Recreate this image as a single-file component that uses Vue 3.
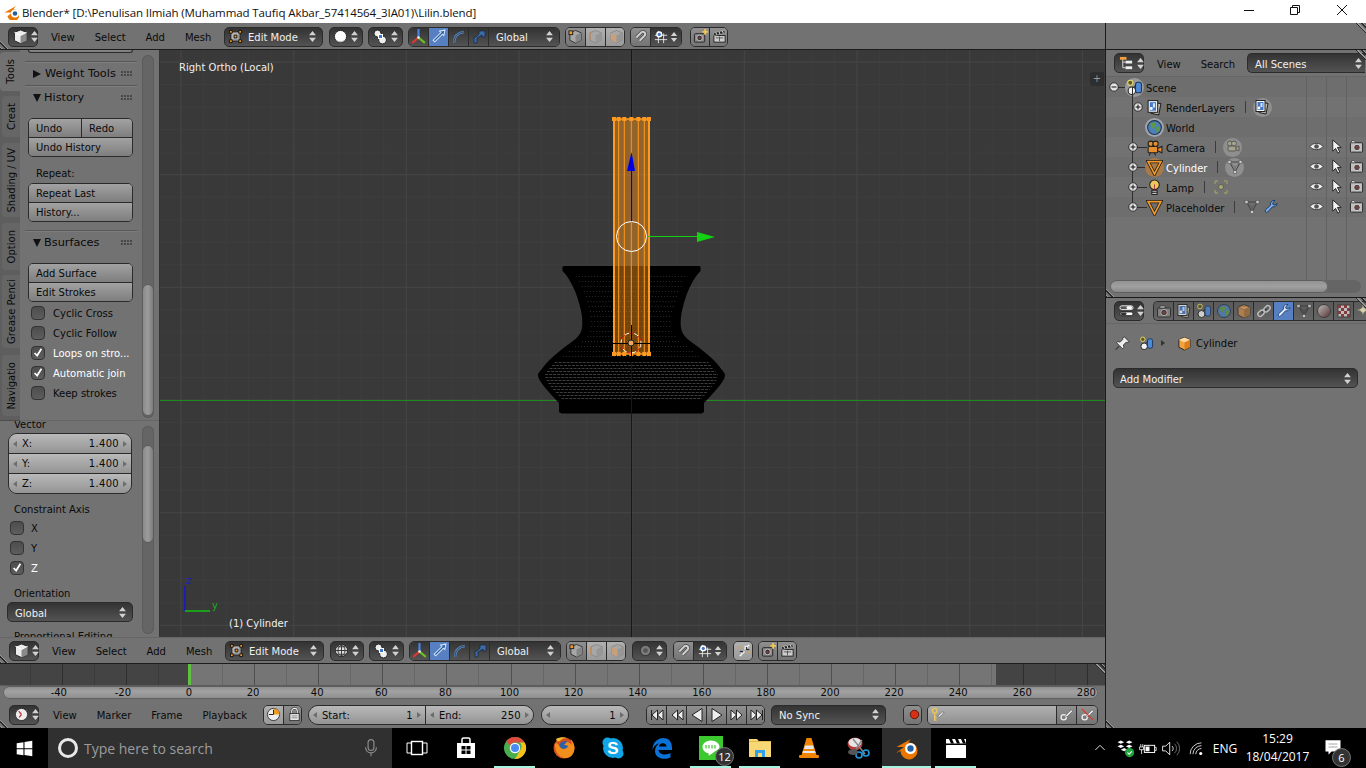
<script setup>
import { h } from 'vue'

// svg bodies, 16 box unless the call says otherwise
const ic = {
  cube: '<path d="M8 1 14.500 3.500v9L8 15.500 1.500 12.500v-9z" fill="#ececec" stroke="#222"/><path d="M8 7v8.500l6.500-3v-9z" fill="#8a8a8a"/><path d="M1.500 3.500 8 7l6.500-3.500" fill="none" stroke="#fff"/>',
  ud: '<path d="M4 .6 1.900 3.300h4.200zM4 7.400 1.900 4.700h4.200z" fill="#d2d2d2"/>',
  mode: '<path d="M3 3h10v10H3z" fill="#8c8c8c" stroke="#222"/><path d="M4 4h7v7H4z" fill="#b5b5b5"/><path d="M1.500 1.500h3v3h-3zM11.500 1.500h3v3h-3zM1.500 11.500h3v3h-3zM11.500 11.500h3v3h-3zM6.500 6.500h3v3h-3z" fill="#f19a2a" stroke="#111"/>',
  sphere: '<circle cx="8" cy="8" r="6.500" fill="#fff" stroke="#222"/><path d="M3 11.500a6 6 0 0 0 10 0 9 7 0 0 1-10 0z" fill="#bbb"/>',
  globe: '<circle cx="8" cy="8" r="6.500" fill="#ddd" stroke="#222"/><path d="M1.500 8h13M8 1.500v13M3 4h10M3 12h10M8 1.500c-5 3-5 10 0 13M8 1.500c5 3 5 10 0 13" stroke="#333" fill="none"/>',
  pivot: '<circle cx="5.500" cy="4.500" r="3.500" fill="#eee" stroke="#222"/><circle cx="10.500" cy="11" r="4" fill="#eee" stroke="#222"/><rect x="6.500" y="5.500" width="4" height="4" fill="#3c78d0" stroke="#fff"/>',
  axes: '<path d="M8 1v8" stroke="#4a86e8" stroke-width="2"/><path d="M8 9 2 14" stroke="#d83a2e" stroke-width="2"/><path d="M8 9l6 5" stroke="#6bbf1e" stroke-width="2"/><circle cx="8" cy="9" r="1.200" fill="#eee"/>',
  tr: '<path d="M14 2 9 3l1.300 1.300L3 11.500 4.500 13l7.200-7.200L13 7z" fill="#2a5a9c" stroke="#d5e4f8" stroke-width="1"/>',
  rot: '<path d="M3 14C3 8 6 4 13 3" stroke="#5584bb" stroke-width="2.500" fill="none"/><path d="M3 14C3 8 6 4 13 3" stroke="#222" stroke-width=".6" fill="none"/>',
  sca: '<path d="M8 2h6v6h-3v-2L6 9v5H3V8h2l3-3z" fill="#3d6ba8" stroke="#15223a" stroke-width=".7"/>',
  v1: '<path d="M8 1.500 14 4v8l-6 3-6-3V4z" fill="#a7a7a7" stroke="#333"/><path d="M8 7v8l6-3V4z" fill="#858585"/><rect x="1" y="2" width="4" height="4" fill="#f19a2a" stroke="#222"/>',
  v2: '<path d="M8 1.500 14 4v8l-6 3-6-3V4z" fill="#a7a7a7" stroke="#8a8a8a"/><path d="M8 7v8l6-3V4z" fill="#979797"/><path d="M2 4v8" stroke="#c98a52" stroke-width="1.500"/>',
  v3: '<path d="M8 1.500 14 4v8l-6 3-6-3V4z" fill="#a7a7a7" stroke="#8a8a8a"/><path d="M8 7v8l-6-3V4z" fill="#c9a07a"/><path d="M8 7v8l6-3V4z" fill="#979797"/>',
  dot: '<circle cx="8" cy="8" r="5.500" fill="#7b7b7b" stroke="#2e2e2e"/><circle cx="8" cy="8" r="2.500" fill="#555"/>',
  magnet: '<path d="M3.500 9 9 3.500a2.500 2.500 0 0 1 3.500 3.500L7 12.500" fill="none" stroke="#444" stroke-width="3.600"/><path d="M3.500 9 9 3.500a2.500 2.500 0 0 1 3.500 3.500L7 12.500" fill="none" stroke="#cfcfcf" stroke-width="2.200"/>',
  snap: '<path d="M5 1v14M11 4v11M1 6h14M1 11h14" stroke="#eee" fill="none"/><circle cx="6" cy="5" r="3.500" fill="#fff"/><circle cx="6" cy="5" r="1.800" fill="#3f78cf"/>',
  mrg: '<path d="M3 14 8 9M13 2 8 7" stroke="#fff" stroke-width="1.500"/><path d="M10 4v3h3M6 12V9H3" stroke="#111" fill="none"/><path d="M12 9h2v2h-2zM2 4h2v2H2z" fill="#f19a2a"/><path d="M8 3h3l-3 3zM5 10h3l-3 3z" fill="#eee"/>',
  cam: '<rect x="1.500" y="5" width="13" height="9" rx="1" fill="#8b8b8b" stroke="#222"/><rect x="4" y="3" width="5" height="2" fill="#ddd" stroke="#222" stroke-width=".6"/><circle cx="8" cy="9.500" r="3.200" fill="#333" stroke="#ccc"/><circle cx="8" cy="9.500" r="1.300" fill="#a33"/>',
  camp: '<rect x="1.500" y="5" width="11" height="9" rx="1" fill="#8b8b8b" stroke="#222"/><circle cx="7" cy="9.500" r="3" fill="#333" stroke="#ccc"/><circle cx="7" cy="9.500" r="1.200" fill="#a33"/><path d="M13 0v6M10 3h6" stroke="#f3c64a" stroke-width="2"/>',
  clap: '<rect x="2" y="7" width="12" height="7" fill="#cfcfcf" stroke="#222"/><path d="M4 9.500h8M8 8v5" stroke="#555"/><path d="m1.500 4 12-2.500.5 3L2 7z" fill="#222" stroke="#ccc" stroke-width=".5"/><path d="m4 3.500 1 2.500M7.500 3l1 2.500M11 2l1 2.500" stroke="#eee"/>',
  rl: '<path d="m7 3 7 1.500L12 15l-7-1.500z" fill="#bdb9ad" stroke="#222"/><rect x="2" y="1.500" width="9" height="11" fill="#fafafa" stroke="#222"/><rect x="3.500" y="3" width="6" height="8" fill="#3f78cf"/><circle cx="5" cy="9" r="1.400" fill="#fff"/><rect x="6.500" y="4" width="2" height="4" fill="#d7e6fa"/>',
  scene: '<circle cx="4" cy="3.500" r="2.400" fill="#5b5a28" stroke="#e5d96b"/><circle cx="5.500" cy="11" r="3.500" fill="#f3f3f3" stroke="#222"/><rect x="9" y="3" width="5.500" height="10" rx="2" fill="#4d8ad8" stroke="#1e3658"/><path d="M7.500 8 9 6" stroke="#222"/>',
  world: '<circle cx="8" cy="8" r="6.500" fill="#4d7fb8" stroke="#20344c"/><path d="M4 4.500 8 3l1.500 2.500L7 9 5 8.500zM9.500 8l3-1 .5 3.500-3 2.500z" fill="#5d9a3e"/>',
  ccam: '<rect x="2" y="7" width="9" height="6" rx="1" fill="#e58f2e" stroke="#222"/><circle cx="4.500" cy="4.500" r="2.500" fill="#e58f2e" stroke="#222"/><circle cx="9" cy="4.500" r="2.500" fill="#e58f2e" stroke="#222"/><path d="m11 9 4-2v6l-4-2zM4 13l-1 2.500M8 13l1 2.500" fill="#e58f2e" stroke="#222"/>',
  gcam: '<rect x="3" y="7" width="8" height="5" rx="1" fill="#a3a38f" stroke="#5b5b53"/><circle cx="5" cy="4.500" r="2.500" fill="#a3a38f" stroke="#5b5b53"/><circle cx="9" cy="4.500" r="2.500" fill="#a3a38f" stroke="#5b5b53"/><path d="m11 8.500 3-1.500v5l-3-1.500z" fill="#a3a38f" stroke="#5b5b53"/>',
  mesh: '<path d="M2 2.500h12L8 14z" fill="none" stroke="#1b1b1b" stroke-width="3"/><path d="M2 2.500h12L8 14z" fill="none" stroke="#f19a2a" stroke-width="1.600"/>',
  gmesh: '<path d="M2.500 3h11L8 13z" fill="none" stroke="#444" stroke-width="1"/><path d="M2.500 3 8 8.500 13.500 3M8 8.500V13" stroke="#444" stroke-width=".5" fill="none"/><path d="M1 1.500h3v3H1zM12 1.500h3v3h-3zM6.500 11.500h3v3h-3z" fill="#c9c9c9" stroke="#444" stroke-width=".5"/>',
  lamp: '<circle cx="8" cy="5.500" r="4.500" fill="#f2c75a" stroke="#222"/><path d="M8 10V5" stroke="#a45" /><path d="M5.500 10.500h5v4h-5z" fill="#c7c7c7" stroke="#222"/><path d="M5.500 12.500h5" stroke="#222"/>',
  lampd: '<circle cx="8" cy="8" r="2.500" fill="#a8a876" stroke="#5f5f4a"/><path d="M2 2h3M2 2v3M14 2h-3M14 2v3M2 14h3M2 14v-3M14 14h-3M14 14v-3" stroke="#9a9a6a" stroke-width="1.300"/>',
  wr: '<path d="M14 4.500a3.500 3.500 0 0 1-4.500 3.300L4.600 13a1.500 1.500 0 0 1-2.100-2.100l5.200-4.900A3.500 3.500 0 0 1 12 1.500L9.700 3.800l.4 1.900 1.900.4z" fill="#e8f1fb" stroke="#224a82"/>',
  wrb: '<path d="M14 4.500a3.500 3.500 0 0 1-4.500 3.300L4.600 13a1.500 1.500 0 0 1-2.100-2.100l5.200-4.900A3.500 3.500 0 0 1 12 1.500L9.700 3.800l.4 1.900 1.900.4z" fill="#7fb0e8" stroke="#1c3a66"/>',
  eye: '<path d="M1 8c3-4.500 11-4.500 14 0-3 4.500-11 4.500-14 0z" fill="#eee" stroke="#333"/><circle cx="8" cy="8" r="2.500" fill="#555"/>',
  arrow: '<path d="M4 1v12l3-3 2.500 5 2-1-2.500-5h4z" fill="#f3f3f3" stroke="#222"/>',
  rcam: '<rect x="1.500" y="4" width="13" height="10" rx="1" fill="#bfbfbf" stroke="#222"/><rect x="3" y="2" width="3" height="2" fill="#eee" stroke="#222" stroke-width=".5"/><circle cx="8.500" cy="9" r="3.500" fill="#4a4a4a" stroke="#ddd"/><circle cx="8.500" cy="9" r="1.500" fill="#8c3b3b"/>',
  box: '<path d="M8 1.500 14 4v8l-6 3-6-3V4z" fill="#c78a4a" stroke="#333"/><path d="M2 4l6 3 6-3" fill="#e0a25f" stroke="#6b4a25" stroke-width=".5"/><path d="M8 7v8l6-3V4z" fill="#a56f38"/>',
  cube2: '<path d="M8 1.500 14 4v8l-6 3-6-3V4z" fill="#f3a23d" stroke="#222"/><path d="M2 4l6 3 6-3-6-2.500z" fill="#ffd9a3"/><path d="M8 7v8l6-3V4z" fill="#d97f1d"/>',
  link: '<path d="M6 10 10 6" stroke="#333" stroke-width="2"/><rect x="1.500" y="8" width="7" height="4.500" rx="2.200" transform="rotate(-45 5 10.200)" fill="none" stroke="#ddd" stroke-width="1.500"/><rect x="7.500" y="3.500" width="7" height="4.500" rx="2.200" transform="rotate(-45 11 5.700)" fill="none" stroke="#ddd" stroke-width="1.500"/>',
  tmesh: '<path d="M2.500 3h11L8 13z M2.500 3 8 8.500 13.500 3M8 8.500V13" fill="none" stroke="#333"/><path d="M1 1.500h3v3H1zM12 1.500h3v3h-3zM6.500 11.500h3v3h-3z" fill="#e0e0e0" stroke="#333" stroke-width=".5"/>',
  mat: '<defs><linearGradient id="mg" x1="0" x2="1" y1="0" y2="1"><stop offset="0" stop-color="#ddd"/><stop offset="1" stop-color="#522"/></linearGradient></defs><circle cx="8" cy="8" r="6.500" fill="url(#mg)" stroke="#333"/>',
  tex: '<rect x="2" y="2" width="12" height="12" fill="#ddd" stroke="#333"/><path d="M2 2h3v3H2zM8 2h3v3H8zM5 5h3v3H5zM11 5h3v3h-3zM2 8h3v3H2zM8 8h3v3H8zM5 11h3v3H5zM11 11h3v3h-3z" fill="#8c3030"/>',
  part: '<path d="M7 1c.5 4 1.500 5 6 6-4.500 1-5.500 2-6 6-.5-4-1.500-5-6-6 4.500-1 5.500-2 6-6z" fill="#fff5c8" stroke="#6a6a4a" stroke-width=".5"/><path d="M13 1v4M11 3h4M13 11v4M11 13h4" stroke="#f5e9a8"/>',
  props: '<rect x="1" y="3" width="14" height="4" rx="2" fill="#555" stroke="#eee"/><rect x="8" y="3.500" width="6" height="3" rx="1.500" fill="#fff"/><rect x="1" y="9.500" width="14" height="4" rx="2" fill="#fff" stroke="#222"/><rect x="2" y="10" width="6" height="3" rx="1.500" fill="#333"/>',
  oul: '<path d="M4 2.500v10M4 6.500h3M4 12.500h3" stroke="#ddd" fill="none"/><rect x="1" y="1" width="7" height="3" fill="#f2a13b"/><rect x="7" y="5" width="7" height="3" fill="#eee"/><rect x="7" y="11" width="7" height="3" fill="#eee"/>',
  pin: '<path d="m10 1 5 5-2 1-1-.5-3 3 .5 2.500-1.500 1.500-3-3-4 4 3.500-4.500-3-3L3 6l2.500.5 3-3L8 2.500z" fill="#eee" stroke="#222" stroke-width=".8"/>',
  clock: '<circle cx="8" cy="8" r="6.500" fill="#eee" stroke="#333"/><path d="M8 8 5 4.500M8 8l-2.500 3" stroke="#b33" stroke-width="1.300"/>',
  clocko: '<circle cx="8" cy="8" r="6.500" fill="#eee" stroke="#333"/><path d="M8 8V1.500A6.500 6.500 0 0 1 14.500 8z" fill="#ee9b23"/><path d="M8 8V3M8 8H3" stroke="#222"/>',
  lock: '<path d="M5 7V4.500a3 3 0 0 1 6 0V7" fill="none" stroke="#333" stroke-width="2.400"/><path d="M5 7V4.500a3 3 0 0 1 6 0V7" fill="none" stroke="#eee" stroke-width="1.200"/><rect x="3" y="7" width="10" height="7.500" fill="#e6e6e6" stroke="#333"/><path d="M5 9.500h6M5 11.500h6" stroke="#888"/>',
  pfirst: '<path d="M2.500 3v10M14 3 8.500 8l5.500 5zM8.500 3 3 8l5.500 5z" fill="#eee" stroke="#222"/>',
  pkey: '<path d="M14 3 8.500 8l5.500 5zM8.500 3 3 8l5.500 5z" fill="#eee" stroke="#222"/>',
  pback: '<path d="M13 1.500 3 8l10 6.500z" fill="#eee" stroke="#222"/>',
  pplay: '<path d="M3 1.500 13 8 3 14.500z" fill="#eee" stroke="#222"/>',
  pnext: '<path d="m2 3 5.500 5L2 13zM7.500 3 13 8l-5.500 5z" fill="#eee" stroke="#222"/>',
  plast: '<path d="M13.500 3v10M2 3l5.500 5L2 13zM7.500 3 13 8l-5.500 5z" fill="#eee" stroke="#222"/>',
  rec: '<circle cx="8" cy="8" r="4.500" fill="#d92f14" stroke="#5c1408"/>',
  keys: '<circle cx="5" cy="4" r="2.500" fill="none" stroke="#e8c65a" stroke-width="1.500"/><path d="M5 6.500V14h2M5 11h2" fill="none" stroke="#e8c65a" stroke-width="1.500"/><path d="m8 10 5-5 2 1-5 5z" fill="#ddd" stroke="#444" stroke-width=".5"/>',
  key: '<circle cx="5" cy="11" r="2.800" fill="none" stroke="#eee" stroke-width="1.400"/><path d="m7 9 6-6 1.500 1.500-6 6z" fill="#eee" stroke="#333" stroke-width=".5"/>',
  keyx: '<circle cx="5" cy="11" r="2.800" fill="none" stroke="#eee" stroke-width="1.400"/><path d="m7 9 6-6 1.500 1.500-6 6z" fill="#eee" stroke="#333" stroke-width=".5"/><path d="m2 2 12 12" stroke="#d73a2a" stroke-width="1.300"/>',
  plus: '<circle cx="8" cy="8" r="4.200" fill="#e2e2e2" stroke="#222" stroke-width=".9"/><path d="M5.600 8h4.800M8 5.600v4.800" stroke="#111"/>',
  minus: '<circle cx="8" cy="8" r="4.200" fill="#e2e2e2" stroke="#222" stroke-width=".9"/><path d="M5.600 8h4.800" stroke="#111"/>',
  blend: '<path d="M3 13.500 9 8.500H1.500L13 2l-2.500 3a6 6 0 1 1-6 7z" fill="#ea7600"/><circle cx="12" cy="9.500" r="4" fill="#fff"/><circle cx="12" cy="9.500" r="2.300" fill="#24609f"/>',
  win: '<path d="M1 4.500 10.500 3v8.500H1zM12 2.800 23 1v10.500H12zM1 13h9.500v8.500L1 20zM12 13h11v10l-11-1.700z" fill="#fff"/>',
  mic: '<rect x="8.500" y="2" width="7" height="13" rx="3.500" fill="none" stroke="#8b8b8b" stroke-width="1.400"/><path d="M5.500 11c0 9 13 9 13 0M12 18v4" fill="none" stroke="#8b8b8b" stroke-width="1.400"/>',
  task: '<rect x="6.500" y="5.500" width="11" height="13" fill="none" stroke="#fff" stroke-width="1.400"/><path d="M6 7H2v10h4M18 7h4v10h-4" fill="none" stroke="#fff" stroke-width="1"/>',
  store: '<path d="M3 7h18v15H3z" fill="#fff"/><path d="M8 7V3.500a1.500 1.500 0 0 1 1.500-1.500h5A1.500 1.500 0 0 1 16 3.500V7" fill="none" stroke="#fff" stroke-width="1.500"/><path d="M7.500 10h4v3.500h-4zM12.500 10h4v3.500h-4zM7.500 14.500h4V18h-4zM12.500 14.500h4V18h-4z" fill="#000"/>',
  chrome: '<circle cx="12" cy="12" r="11" fill="#4aae4f"/><path d="M12 1a11 11 0 0 1 9.600 5.500H12a5.500 5.500 0 0 0-5 3L3.200 5.200A11 11 0 0 1 12 1z" fill="#dd4b3e"/><path d="M21.600 6.500A11 11 0 0 1 12 23l4.800-8.300a5.500 5.500 0 0 0 0-8.200z" fill="#f8c11c"/><circle cx="12" cy="12" r="5.200" fill="#fff"/><circle cx="12" cy="12" r="4" fill="#4a8af4"/>',
  fox: '<circle cx="12" cy="12" r="10.500" fill="#d84f1e"/><circle cx="13" cy="11" r="6" fill="#2f5fa8"/><path d="M3 8c0 4 1 12 9 14 7 1 10.500-5 10.500-10 0-3-1.500-7-4-9 1 2 1.500 4 1 6-1-2-3-3-5-3.500 1 1-2 2.500-2.500 3 1 1 3 .5 4 1.500-1 3.500-6 4-8 1-1-2-2-2.500-3-4z" fill="#f08f1c"/><path d="M4 3c3-2 8-2.500 11-1-3 0-6 1-7 3-1 .5-3 1-4-2z" fill="#f5bc2f"/>',
  skype: '<circle cx="12" cy="12" r="10" fill="#12a5e6"/><circle cx="6.500" cy="6.500" r="5" fill="#12a5e6"/><circle cx="17.500" cy="17.500" r="5" fill="#12a5e6"/><text x="12" y="18" font-family="Liberation Sans" font-weight="700" font-size="17" fill="#fff" text-anchor="middle">S</text>',
  edge: '<path d="M2.500 14C2.500 5 9 2 13.500 2c5 0 8.500 3.500 8.500 10v2H8.500c.5 5 8 5.500 12 3v4.500c-6 2.500-15 1.500-15.500-6C5 12 6.500 9 9 7.500 5.500 8 3.500 11 2.500 14zM8.800 10.500h7.700C16.500 6 9.500 6 8.800 10.500z" fill="#0a72d6"/>',
  line: '<rect width="24" height="24" fill="#3cc92f"/><path d="M12 4.500c-5 0-8.500 3-8.500 6.500 0 3 2.500 5.500 6 6.300.4 1 0 2 .2 2.200.5 0 3.500-2 6-4 2-1.200 4.800-2.500 4.800-4.500 0-3.500-3.500-6.500-8.500-6.500z" fill="#fff"/><path d="M7 9v3.500M10 9v3.500M13 9v3.500M16 9v3.500" stroke="#3cc92f" stroke-width="1.200"/>',
  folder: '<path d="M1 3h8l2 2.500h12V21H1z" fill="#f8d775"/><path d="M1 5.500h22" stroke="#e6b94b"/><path d="M7 14h10v7H7z" fill="#32a0e8"/><path d="M10 17h4v4h-4z" fill="#f8d775"/>',
  vlc: '<path d="M9.500 2h5l5 17h-15z" fill="#f08400"/><path d="M8 9.500h8l1 3.500H7zM6 15h12l.6 2H5.500z" fill="#e7e7e7"/><rect x="2" y="19" width="20" height="3" rx="1" fill="#f08400"/>',
  snip: '<ellipse cx="9" cy="8" rx="7.500" ry="6.500" fill="#b63a3a"/><ellipse cx="9" cy="6.500" rx="6.500" ry="4.500" fill="#e5e5e5"/><path d="m7 3 12 15M16 4 10 13" stroke="#888" stroke-width="1.400"/><circle cx="13" cy="19" r="3" fill="none" stroke="#1f9be0" stroke-width="1.600"/><circle cx="20" cy="17" r="3" fill="none" stroke="#1f9be0" stroke-width="1.600"/><ellipse cx="7" cy="16" rx="5" ry="3" fill="#555"/>',
  blendl: '<path d="M1 17 9 11H1.500L16 3l-3 3.500a8.500 8.500 0 1 1-7.500 8.500z" fill="#ea7600"/><circle cx="15.500" cy="12.500" r="5.500" fill="#fff"/><circle cx="15.500" cy="12.500" r="3.200" fill="#24609f"/>',
  clapw: '<rect x="2" y="9" width="20" height="13" rx=".5" fill="#fff"/><path d="M2 3h20v4.500H2z" fill="#fff"/><path d="M5 3h3l2 4.500H7zM11 3h3l2 4.500h-3zM17 3h3l2 4.500h-3z" fill="#000"/>',
  chev: '<path d="m5 15 7-7 7 7" fill="none" stroke="#fff" stroke-width="1.300"/>',
  drop: '<path d="m3 3 4-2 4 2-4 2zm10 0 4-2 4 2-4 2zM3 8l4-2 4 2-4 2zm10 0 4-2 4 2-4 2zM7 12l4-2 4 2-4 2z" fill="#fff" transform="translate(0 2)"/><circle cx="17.500" cy="17.500" r="5.500" fill="#20a53c"/><path d="m15 17.500 2 2 3-3.500" fill="none" stroke="#fff" stroke-width="1.300"/>',
  batt: '<rect x="8" y="8" width="13" height="9" fill="none" stroke="#fff" stroke-width="1.200"/><rect x="9.500" y="9.500" width="5" height="6" fill="#fff"/><path d="M21 10.500h2v4h-2M2 10h5v3.500H2zM3.500 10V6.500M6 10V6.500M4.500 13.500V19" fill="none" stroke="#fff"/>',
  vol: '<path d="M2 9h4l5-5v16l-5-5H2z" fill="none" stroke="#fff" stroke-width="1.100"/><path d="M14 9a4 4 0 0 1 0 6" fill="none" stroke="#fff" stroke-width="1.100"/><path d="M17 6a8 8 0 0 1 0 12M20 3.500a12 12 0 0 1 0 17" fill="none" stroke="#777" stroke-width="1.100"/>',
  wifi: '<path d="M3 20a16 16 0 0 1 16-16M7 20A12 12 0 0 1 19 8M11 20a8 8 0 0 1 8-8" fill="none" stroke="#ddd" stroke-width="1.300"/><circle cx="18" cy="19" r="2.200" fill="#fff"/>',
  note: '<path d="M2 3h20v15H10l-4 4v-4H2z" fill="#fff"/><path d="M6 8h12M6 12h12" stroke="#888"/>',
}

const Ic = (p) => h('svg', {
  width: p.s || 16,
  height: p.s || 16,
  viewBox: `0 0 ${p.box || 16} ${p.box || 16}`,
  innerHTML: ic[p.n],
})
Ic.props = ['n', 's', 'box']

const viewHeaders = [
  { key: 'top', shade: 'sphere', tail: 'a' },
  { key: 'bottom', shade: 'globe', tail: 'b' },
]

const tabs = [
  { label: 'Tools', h: 39, mt: 2, on: true },
  { label: 'Creat', h: 41, mt: 5 },
  { label: 'Shading / UV', h: 74, mt: 6 },
  { label: 'Option', h: 47, mt: 6 },
  { label: 'Grease Penci', h: 73, mt: 5 },
  { label: 'Navigatio', h: 61, mt: 7 },
]

const bsurfChecks = [
  { label: 'Cyclic Cross', on: false },
  { label: 'Cyclic Follow', on: false },
  { label: 'Loops on stro...', on: true },
  { label: 'Automatic join', on: true },
  { label: 'Keep strokes', on: false },
]

const axisChecks = [
  { label: 'X', on: false },
  { label: 'Y', on: false },
  { label: 'Z', on: true },
]

const outliner = [
  { label: 'Scene', icon: 'scene', bg: '#9a9a9a', exp: 'minus', indent: 0, branch: true },
  { label: 'RenderLayers', icon: 'rl', exp: 'plus', indent: 1, sub: true, extras: ['rl'], halo: true },
  { label: 'World', icon: 'world', bg: '#9fa4b0', indent: 1 },
  { label: 'Camera', icon: 'ccam', exp: 'plus', indent: 1, branch: true, vis: true, extras: ['gcam'], halo: true },
  { label: 'Cylinder', icon: 'mesh', bg: '#a97a45', exp: 'plus', indent: 1, branch: true, vis: true, light: true, extras: ['gmesh'], halo: true },
  { label: 'Lamp', icon: 'lamp', exp: 'plus', indent: 1, branch: true, vis: true, extras: ['lampd'] },
  { label: 'Placeholder', icon: 'mesh', exp: 'plus', indent: 1, branch: true, vis: true, extras: ['gmesh', 'wrb'] },
]

const propTabs = ['cam', 'rl', 'scene', 'world', 'box', 'link', 'wr', 'tmesh', 'mat', 'tex', 'part']
const transport = ['pfirst', 'pkey', 'pback', 'pplay', 'pnext', 'plast']

const zeroX = 190
const perFrame = 3.205
const ticks = []
for (let f = -50; f <= 280; f += 10) ticks.push(f)
const rulerLabels = []
for (let f = -40; f <= 280; f += 20) rulerLabels.push(f)
const frameX = (f) => zeroX + f * perFrame

const taskIcons = [
  { n: 'task' }, { n: 'store' },
  { n: 'chrome', run: true }, { n: 'fox' }, { n: 'skype' }, { n: 'edge' },
  { n: 'line', run: true, badge: '12' }, { n: 'folder', run: true },
  { n: 'vlc' }, { n: 'snip' },
  { n: 'blendl', run: true, active: true }, { n: 'clapw', run: true },
]

// right side of the vase, x offset from the axis per screen y
const keys = [[271, 69], [277, 64], [290, 57], [303, 52.5], [317, 49.5], [330, 50], [338, 55], [348, 68], [360, 82], [370, 90.5], [375, 93.5], [383, 90], [395, 80], [403, 72.5]]
const cx = 631.5
const smooth = (y) => {
  let i = 1
  while (i < keys.length - 1 && y > keys[i][0]) i++
  const p0 = keys[Math.max(i - 2, 0)]
  const p1 = keys[i - 1]
  const p2 = keys[i]
  const p3 = keys[Math.min(i + 1, keys.length - 1)]
  const t = (y - p1[0]) / (p2[0] - p1[0])
  const m1 = ((p2[1] - p0[1]) / (p2[0] - p0[0])) * (p2[0] - p1[0])
  const m2 = ((p3[1] - p1[1]) / (p3[0] - p1[0])) * (p2[0] - p1[0])
  const t2 = t * t
  const t3 = t2 * t
  return (2 * t3 - 3 * t2 + 1) * p1[1] + (t3 - 2 * t2 + t) * m1 + (-2 * t3 + 3 * t2) * p2[1] + (t3 - t2) * m2
}
const side = [[266, 67], [266.5, 69], [271, 69]]
for (let y = 272; y <= 403; y++) side.push([y, smooth(y)])
side.push([403, 72.5], [412, 72.5], [413.5, 70])
const vasePoints = [
  ...side.map(([y, w]) => `${cx + w},${y}`),
  ...[...side].reverse().map(([y, w]) => `${cx - w},${y}`),
].join(' ')

const wires = []
for (let y = 276; y < 360; y += 5) wires.push({ y, half: smooth(y) - 9, stroke: '#2c2c2c', dash: '1 2' })
for (let y = 362; y < 400; y += 3) wires.push({ y, half: smooth(y) - 7, stroke: '#3c3c3c', dash: '3 1' })

const candleX = [614, 618.7, 624.3, 631.3, 638.3, 644.3, 649]
</script>

<template>
  <div class="screen">
    <div class="titlebar">
      <Ic class="t-logo" n="blend" s="16" />
      <span class="t-text">Blender* [D:\Penulisan Ilmiah (Muhammad Taufiq Akbar_57414564_3IA01)\Lilin.blend]</span>
      <div class="t-btns">
        <span class="t-min"></span>
        <svg width="10" height="10" viewBox="0 0 10 10"><path d="M.5 2.500h7v7h-7zM2.500 2.500v-2h7v7h-2" fill="none" stroke="#111" /></svg>
        <svg width="12" height="12" viewBox="0 0 12 12"><path d="M1 1l10 10M11 1 1 11" stroke="#111" fill="none" /></svg>
      </div>
    </div>

    <div class="work">
      <div class="left">
        <template v-for="vh in viewHeaders" :key="vh.key">
          <div class="hdr" :class="vh.key">
            <span class="hatch h-bl"></span>
            <div class="dk editor"><Ic n="cube" s="15" /><Ic n="ud" s="13" box="8" /></div>
            <div class="menu"><span>View</span><span>Select</span><span>Add</span><span>Mesh</span></div>
            <div class="dk mode"><Ic n="mode" s="15" /><span>Edit Mode</span><Ic class="push" n="ud" s="13" box="8" /></div>
            <div class="dk shade"><Ic :n="vh.shade" s="15" /><Ic class="push" n="ud" s="13" box="8" /></div>
            <div class="dk pivot"><Ic n="pivot" s="16" /><Ic class="push" n="ud" s="13" box="8" /></div>
            <div class="dk-grp manip">
              <span class="cell dark"><Ic n="axes" s="17" /></span>
              <span class="cell blue"><Ic n="tr" s="17" /></span>
              <span class="cell dark"><Ic n="rot" s="16" /></span>
              <span class="cell dark"><Ic n="sca" s="16" /></span>
              <span class="cell dark wide"><span>Global</span><Ic class="push" n="ud" s="13" box="8" /></span>
            </div>
            <div class="dk-grp layers">
              <span class="cell"><Ic n="v1" s="15" /></span>
              <span class="cell lit"><Ic n="v2" s="15" /></span>
              <span class="cell lit"><Ic n="v3" s="15" /></span>
            </div>
            <template v-if="vh.tail === 'a'">
              <div class="dk-grp snap-a">
                <span class="cell"><Ic n="magnet" s="15" /></span>
                <span class="cell dark snapc"><Ic n="snap" s="14" /><Ic n="ud" s="12" box="8" /></span>
              </div>
              <div class="dk-grp rend-a">
                <span class="cell"><Ic n="camp" s="15" /></span>
                <span class="cell"><Ic n="clap" s="15" /></span>
              </div>
            </template>
            <template v-else>
              <div class="dk prop"><Ic n="dot" s="15" /><Ic class="push" n="ud" s="13" box="8" /></div>
              <div class="dk-grp snap-b">
                <span class="cell"><Ic n="magnet" s="15" /></span>
                <span class="cell dark snapc"><Ic n="snap" s="14" /><Ic n="ud" s="12" box="8" /></span>
              </div>
              <div class="dk-grp merge"><span class="cell lit"><Ic n="mrg" s="15" /></span></div>
              <div class="dk-grp rend-b">
                <span class="cell"><Ic n="camp" s="15" /></span>
                <span class="cell"><Ic n="clap" s="15" /></span>
              </div>
            </template>
          </div>

          <div v-if="vh.key === 'top'" class="view">
            <div class="shelf">
              <div class="tabs">
                <div
                  v-for="t in tabs"
                  :key="t.label"
                  class="tab"
                  :class="{ on: t.on }"
                  :style="{ height: t.h + 'px', marginTop: t.mt + 'px' }"
                >
                  <span>{{ t.label }}</span>
                </div>
              </div>
              <div class="stack">
                <div class="tools">
                  <div class="cut"></div>
                  <div class="sep first"></div>
                  <div class="phead"><i class="tri r"></i>Weight Tools<b class="grip"></b></div>
                  <div class="sep"></div>
                  <div class="phead"><i class="tri"></i>History<b class="grip"></b></div>
                  <div class="block mt10">
                    <div class="brow"><span class="half">Undo</span><span class="half">Redo</span></div>
                    <div class="brow"><span>Undo History</span></div>
                  </div>
                  <div class="rep">Repeat:</div>
                  <div class="block">
                    <div class="brow"><span>Repeat Last</span></div>
                    <div class="brow"><span>History...</span></div>
                  </div>
                  <div class="sep s9"></div>
                  <div class="phead"><i class="tri"></i>Bsurfaces<b class="grip"></b></div>
                  <div class="block mt10">
                    <div class="brow"><span>Add Surface</span></div>
                    <div class="brow"><span>Edit Strokes</span></div>
                  </div>
                  <div class="checks">
                    <div v-for="c in bsurfChecks" :key="c.label" class="check" :class="{ on: c.on }">
                      <span class="box"><svg v-if="c.on" viewBox="0 0 14 14"><path d="m3 7 3 3 5-8" fill="none" stroke="#fff" stroke-width="2" /></svg></span>
                      {{ c.label }}
                    </div>
                  </div>
                  <div class="track t1"><div class="thumb"></div></div>
                </div>
                <div class="oper">
                  <div class="olabel vec">Vector</div>
                  <div class="fields">
                    <div class="num"><i class="lt"></i><span>X:</span><em>1.400</em><i class="rt"></i></div>
                    <div class="num"><i class="lt"></i><span>Y:</span><em>1.400</em><i class="rt"></i></div>
                    <div class="num"><i class="lt"></i><span>Z:</span><em>1.400</em><i class="rt"></i></div>
                  </div>
                  <div class="olabel con">Constraint Axis</div>
                  <div v-for="c in axisChecks" :key="c.label" class="check ax" :class="{ on: c.on }">
                    <span class="box"><svg v-if="c.on" viewBox="0 0 14 14"><path d="m3 7 3 3 5-8" fill="none" stroke="#fff" stroke-width="2" /></svg></span>
                    {{ c.label }}
                  </div>
                  <div class="olabel ori">Orientation</div>
                  <div class="dk glob"><span>Global</span><Ic class="push" n="ud" s="13" box="8" /></div>
                  <div class="olabel pro">Proportional Editing</div>
                  <div class="track t2"><div class="thumb"></div></div>
                </div>
              </div>
            </div>

            <div class="viewport">
              <svg class="scene" width="945" height="587" viewBox="160 50 945 587">
                <path d="M160 400.500h945" stroke="#1f8a1f" />
                <polygon :points="vasePoints" fill="#000" />
                <path
                  v-for="w in wires"
                  :key="w.y"
                  :d="`M${cx - w.half} ${w.y}.5H${cx + w.half}`"
                  :stroke="w.stroke"
                  :stroke-dasharray="w.dash"
                />
                <path d="M631.500 50v587" stroke="#15152e" />
                <rect x="614" y="119" width="35" height="235" fill="#ff981a" fill-opacity=".45" />
                <path
                  v-for="x in candleX"
                  :key="x"
                  :d="`M${x} 119V354`"
                  stroke="#ff9a1e"
                  :stroke-width="x === 614 || x === 649 ? 2 : 1"
                />
                <path d="M614 119h35M614 354h35" stroke="#ff9a1e" stroke-width="1.500" />
                <template v-for="x in candleX" :key="x">
                  <rect :x="x - 2" y="117" width="4" height="4" fill="#ff9a1e" />
                  <rect :x="x - 2" y="352" width="4" height="4" fill="#ff9a1e" />
                </template>
                <circle cx="631" cy="343" r="10" fill="none" stroke="#fff" stroke-dasharray="5 5" />
                <circle cx="631" cy="343" r="10" fill="none" stroke="#e01818" stroke-dasharray="5 5" stroke-dashoffset="5" />
                <path d="M613 343.500h37M631.500 325v37" stroke="#000" />
                <circle cx="631" cy="343" r="3" fill="#f0a65c" stroke="#222" />
                <path d="M631.500 222v-54" stroke="#0000e0" stroke-width="1.200" />
                <path d="M631.500 152 635 171h-8z" fill="#0000e0" />
                <circle cx="631.500" cy="236.500" r="15" fill="none" stroke="#fff" />
                <path d="M647 236.500h50" stroke="#12d012" stroke-width="1.200" />
                <path d="M697 232v10l18-5z" fill="#12d012" />
                <path d="M185 586v25" stroke="#1414d8" stroke-width="1.500" />
                <path d="M185 611h25" stroke="#12c012" stroke-width="1.500" />
              </svg>
              <div class="vlabel ortho">Right Ortho (Local)</div>
              <div class="vlabel cyl">(1) Cylinder</div>
              <div class="axl zl">z</div>
              <div class="axl yl">y</div>
              <div class="npanel">+</div>
            </div>
          </div>
        </template>

        <div class="strip">
          <span class="shade-l"></span>
          <span class="shade-r"></span>
          <span
            v-for="f in ticks"
            :key="f"
            class="tick"
            :class="{ major: f % 20 === 0 }"
            :style="{ left: frameX(f) + 'px' }"
          ></span>
          <span class="play"></span>
          <span class="hatch h-tr"></span>
        </div>
        <div class="scrub">
          <div class="scrub-bar">
            <span
              v-for="f in rulerLabels"
              :key="f"
              class="rl"
              :style="{ left: frameX(f) - (f < 0 ? 6 : 4) + 'px' }"
            >{{ f }}</span>
          </div>
        </div>
        <div class="hdr tl">
          <span class="hatch h-bl"></span>
          <div class="dk editor"><Ic n="clock" s="15" /><Ic n="ud" s="13" box="8" /></div>
          <div class="menu"><span>View</span><span>Marker</span><span>Frame</span><span>Playback</span></div>
          <div class="dk-grp clockg">
            <span class="cell lit"><Ic n="clocko" s="15" /></span>
            <span class="cell"><Ic n="lock" s="15" /></span>
          </div>
          <div class="range">
            <div class="num"><i class="lt"></i><span>Start:</span><em>1</em><i class="rt"></i></div>
            <div class="num"><i class="lt"></i><span>End:</span><em>250</em><i class="rt"></i></div>
          </div>
          <div class="range cur">
            <div class="num"><i class="lt"></i><em>1</em><i class="rt"></i></div>
          </div>
          <div class="dk-grp trans">
            <span v-for="t in transport" :key="t" class="cell"><Ic :n="t" s="16" /></span>
          </div>
          <div class="dk sync"><span>No Sync</span><Ic class="push" n="ud" s="13" box="8" /></div>
          <div class="dk-grp recb"><span class="cell"><Ic n="rec" s="15" /></span></div>
          <div class="dk-grp keyg">
            <span class="cell kfield"><Ic n="keys" s="15" /></span>
            <span class="cell"><Ic n="key" s="15" /></span>
            <span class="cell"><Ic n="keyx" s="15" /></span>
          </div>
        </div>
      </div>

      <div class="right">
        <div class="rtop"><span class="hatch h-tr"></span></div>
        <div class="outl">
          <div class="ohdr">
            <span class="hatch h-tr"></span>
            <div class="dk editor"><Ic n="oul" s="15" /><Ic n="ud" s="13" box="8" /></div>
            <div class="menu"><span>View</span><span>Search</span></div>
            <div class="dk scenes"><span>All Scenes</span><Ic class="push" n="ud" s="13" box="8" /></div>
          </div>
          <div class="orows">
            <i class="col c1"></i><i class="col c2"></i><i class="col c3"></i>
            <div v-for="(r, i) in outliner" :key="r.label" class="orow" :class="{ alt: i % 2 }">
              <i v-if="r.branch" class="branch" :class="'b' + r.indent"></i>
              <span class="exp" :class="['in' + r.indent, { sub: r.sub }]"><Ic v-if="r.exp" :n="r.exp" s="16" /></span>
              <span class="oicon" :style="r.bg ? { background: r.bg } : null"><Ic :n="r.icon" s="17" /></span>
              <span class="oname" :class="{ light: r.light }">{{ r.label }}</span>
              <template v-if="r.extras">
                <i class="bar"></i>
                <span v-for="e in r.extras" :key="e" class="extra" :class="{ halo: r.halo }"><Ic :n="e" s="16" /></span>
              </template>
              <div v-if="r.vis" class="vis">
                <Ic n="eye" s="15" /><Ic n="arrow" s="15" /><Ic n="rcam" s="15" />
              </div>
            </div>
            <i class="tree"></i>
          </div>
          <div class="oscroll"><div class="othumb"></div></div>
          <span class="hatch h-bl"></span>
        </div>

        <div class="props">
          <div class="phdr">
            <span class="hatch h-tr"></span>
            <div class="dk editor"><Ic n="props" s="15" /><Ic n="ud" s="13" box="8" /></div>
            <div class="ptabs">
              <span v-for="p in propTabs" :key="p" class="ptab" :class="{ act: p === 'wr' }"><Ic :n="p" s="16" /></span>
            </div>
          </div>
          <div class="crumb">
            <Ic n="pin" s="15" />
            <Ic class="cr-scene" n="scene" s="15" />
            <i class="cr-arrow"></i>
            <Ic class="cr-cube" n="cube2" s="15" />
            <span>Cylinder</span>
          </div>
          <div class="dk addmod"><span>Add Modifier</span><Ic class="push" n="ud" s="13" box="8" /></div>
          <span class="hatch h-bl"></span>
        </div>
      </div>
    </div>

    <div class="taskbar">
      <div class="start"><Ic n="win" s="17" box="24" /></div>
      <div class="search">
        <span class="ring"></span>
        <span class="ph">Type here to search</span>
        <Ic class="mic" n="mic" s="20" box="24" />
      </div>
      <div v-for="t in taskIcons" :key="t.n" class="tb" :class="{ run: t.run, active: t.active }">
        <Ic :n="t.n" s="24" box="24" />
        <span v-if="t.badge" class="badge">{{ t.badge }}</span>
      </div>
      <div class="tray">
        <span class="ti w24"><Ic n="chev" s="16" box="24" /></span>
        <span class="ti w25"><Ic n="drop" s="20" box="24" /></span>
        <span class="ti w21"><Ic n="batt" s="19" box="24" /></span>
        <span class="ti w25"><Ic n="vol" s="19" box="24" /></span>
        <span class="ti w26"><Ic n="wifi" s="17" box="24" /></span>
        <span class="ti eng">ENG</span>
        <div class="clock"><span>15:29</span><span>18/04/2017</span></div>
        <span class="ti notif"><Ic class="note" n="note" s="18" box="24" /><span class="badge nb">6</span></span>
      </div>
    </div>
  </div>
</template>

<style>
html, body { margin: 0; background: #000; overflow: hidden; }
</style>

<style scoped>
.screen {
  width: 1366px;
  height: 768px;
  display: flex;
  flex-direction: column;
  font-family: "DejaVu Sans", sans-serif;
  font-size: 10px;
  color: #0a0a0a;
  overflow: hidden;
}
svg { display: block; flex: none; }
.push { margin-left: auto; }

.titlebar {
  height: 23px;
  background: #fff;
  display: flex;
  align-items: center;
  flex: none;
}
.t-logo { margin: 0 3px 0 3px; }
.t-text { font-family: "Open Sans", sans-serif; font-size: 11.5px; letter-spacing: -.09px; color: #111; padding-top: 1px; }
.t-btns { margin-left: auto; display: flex; align-items: center; width: 121px; gap: 36px; margin-right: 1px; padding-bottom: 3px; }
.t-min { width: 10px; height: 1px; background: #111; }

.work { height: 705px; display: flex; flex: none; }
.left { width: 1105px; display: flex; flex-direction: column; }
.right { width: 261px; display: flex; flex-direction: column; border-left: 1px solid #1a1a1a; box-sizing: border-box; }

.hatch {
  position: absolute;
  width: 11px;
  height: 11px;
  background: repeating-linear-gradient(45deg, #2a2a2a 0 1px, #9a9a9a 1px 2px, transparent 2px 4px);
}
.h-bl { left: 0; bottom: 0; clip-path: polygon(0 0, 100% 100%, 0 100%); }
.h-tr { right: 0; top: 0; clip-path: polygon(0 0, 100% 0, 100% 100%); }

.hdr {
  position: relative;
  display: flex;
  align-items: center;
  background: #727272;
  flex: none;
  box-sizing: border-box;
}
.hdr.top { height: 27px; padding: 1px 0 0 8px; border-bottom: 1px solid #1c1c1c; }
.hdr.bottom { height: 27px; padding: 0 0 0 9px; border-top: 1px solid #666; border-bottom: 1px solid #1c1c1c; }
.hdr.tl { height: 28px; padding: 1px 0 0 9px; }

/* blender sits its labels a pixel under the middle of the box */
.menu span, .dk > span, .wide > span, .range em, .range .num > span { position: relative; top: 1px; }

.dk {
  display: flex;
  align-items: center;
  height: 20px;
  box-sizing: border-box;
  border: 1px solid #2b2b2b;
  border-radius: 5px;
  background: linear-gradient(#333, #535353);
  color: #f0f0f0;
  padding: 0 3px 0 5px;
  flex: none;
  white-space: nowrap;
}
.editor { width: 30px; padding: 0 0 0 4px; gap: 0; }
.menu { display: flex; gap: 20px; margin-left: 13px; width: 173px; flex: none; }
.hdr.tl .menu { gap: 20px; width: 210px; margin-left: 14px; }
.mode { width: 99px; gap: 5px; margin-left: 0; padding-left: 3px; }
.shade { width: 34px; margin-left: 6px; padding-left: 3px; }
.pivot { width: 35px; margin-left: 5px; padding-left: 3px; }
.dk-grp {
  display: flex;
  height: 20px;
  box-sizing: border-box;
  border: 1px solid #2b2b2b;
  border-radius: 5px;
  overflow: hidden;
  flex: none;
}
.cell {
  display: flex;
  align-items: center;
  justify-content: center;
  width: 20px;
  background: linear-gradient(#8f8f8f, #747474);
  border-right: 1px solid #2b2b2b;
  box-sizing: border-box;
  flex: none;
}
.cell:last-child { border-right: 0; }
.cell.lit { background: linear-gradient(#b0b0b0, #9a9a9a); }
.cell.dark { background: linear-gradient(#333, #535353); color: #f0f0f0; }
.cell.blue { background: #5680c2; }
.cell.wide { flex: 1; justify-content: flex-start; padding: 0 3px 0 7px; }
.manip { width: 152px; margin-left: 5px; }
.layers { width: 60px; margin-left: 5px; }
.snap-a { width: 52px; margin-left: 5px; }
.snapc { width: 32px; }
.rend-a { width: 38px; margin-left: 8px; }
.rend-a .cell, .rend-b .cell { width: 19px; }
.prop { width: 35px; margin-left: 6px; padding-left: 5px; }
.snap-b { width: 54px; margin-left: 6px; }
.snap-b .snapc { width: 34px; }
.merge { width: 20px; margin-left: 6px; }
.rend-b { width: 39px; margin-left: 5px; }

.view { height: 587px; display: flex; flex: none; }
.shelf { width: 160px; display: flex; background: #727272; flex: none; border-right: 1px solid #333; box-sizing: border-box; }
.tabs {
  width: 20px;
  height: 371px;
  background: #5e5e5e;
  flex: none;
  display: flex;
  flex-direction: column;
  align-items: flex-end;
  border-bottom: 1px solid #4c4c4c;
  box-sizing: border-box;
  position: relative;
  z-index: 1;
}
.tab {
  width: 18px;
  background: #666;
  border-radius: 4px 0 0 4px;
  display: flex;
  align-items: center;
  justify-content: center;
  overflow: hidden;
  box-sizing: border-box;
  flex: none;
}
.tab.on { background: #727272; width: 20px; }
.tab span { writing-mode: vertical-rl; transform: rotate(180deg); white-space: nowrap; font-size: 10px; }
.stack { flex: 1; display: flex; flex-direction: column; min-width: 0; margin-left: -20px; }
.tools { position: relative; height: 371px; padding-left: 20px; box-sizing: border-box; flex: none; border-bottom: 1px solid #666; overflow: hidden; }
.cut { width: 105px; height: 3px; margin-left: 8px; box-sizing: border-box; border: 1px solid #2b2b2b; border-top: 0; border-radius: 0 0 5px 5px; background: #808080; }
.sep { height: 1px; background: #585858; box-shadow: 0 1px #7e7e7e; margin: 0 22px 0 5px; }
.sep.first { margin-top: 8px; }
.sep.s9 { margin-top: 8px; }
.phead {
  height: 23px;
  display: flex;
  align-items: center;
  font-size: 11.3px;
  padding: 0 27px 0 13px;
  position: relative;
}
.tri { width: 0; height: 0; border-left: 4.500px solid transparent; border-right: 4.500px solid transparent; border-top: 8px solid #111; margin: 0 3px 0 0; }
.tri.r { border: 0; border-top: 4.500px solid transparent; border-bottom: 4.500px solid transparent; border-left: 8px solid #111; margin-right: 4px; }
.grip {
  margin-left: auto;
  width: 11px;
  height: 6px;
  background: radial-gradient(circle at 1px 1px, #444 0 .7px, transparent .8px) 0 0 / 3px 3px;
}
.block {
  width: 105px;
  margin-left: 8px;
  box-sizing: border-box;
  border: 1px solid #2b2b2b;
  border-radius: 5px;
  overflow: hidden;
}
.mt10 { margin-top: 9px; }
.brow { display: flex; height: 19px; background: linear-gradient(#a2a2a2, #7e7e7e); border-top: 1px solid #2b2b2b; box-sizing: border-box; align-items: center; padding-left: 7px; }
.brow:first-child { border-top: 0; height: 18px; }
.brow .half { flex: none; width: 52px; height: 100%; display: flex; align-items: center; }
.brow .half + .half { border-left: 1px solid #2b2b2b; padding-left: 7px; width: 52px; margin-left: -7px; }
.rep { height: 26px; display: flex; align-items: center; padding: 6px 0 0 16px; box-sizing: border-box; }
.checks { margin-top: 1px; }
.check { height: 20px; display: flex; align-items: center; padding-left: 11px; }
.check .box {
  width: 14px;
  height: 14px;
  border: 1px solid #333;
  border-radius: 4px;
  background: linear-gradient(#4d4d4d, #5d5d5d);
  box-sizing: border-box;
  flex: none;
  margin-right: 8px;
}
.check.on { color: #fff; }
.check.ax { padding-left: 10px; font-size: 10px; }
.check.ax .box { margin-right: 7px; }
.track {
  position: absolute;
  right: 5px;
  width: 12px;
  border-radius: 6px;
  background: #656565;
  box-shadow: inset 0 0 0 1px #5c5c5c;
}
.thumb {
  position: absolute;
  left: 0;
  right: 0;
  border-radius: 6px;
  background: linear-gradient(90deg, #8c8c8c, #9c9c9c 50%, #7c7c7c);
  border: 1px solid #5c5c5c;
  box-sizing: border-box;
}
.t1 { top: 5px; height: 363px; }
.t1 .thumb { top: 229px; height: 132px; }
.t2 { top: 5px; height: 208px; }
.t2 .thumb { top: 19px; height: 98px; }
.oper { position: relative; height: 216px; overflow: hidden; flex: none; }
.olabel { height: 14px; line-height: 14px; padding-left: 14px; }
.vec { margin-top: -3px; }
.fields { margin: 1px 0 0 8px; width: 124px; border: 1px solid #2b2b2b; border-radius: 9px; overflow: hidden; box-sizing: border-box; }
.num {
  height: 20px;
  display: flex;
  align-items: center;
  background: linear-gradient(#b9b9b9, #949494);
  border-top: 1px solid #2b2b2b;
  box-sizing: border-box;
  padding: 0 4px;
  font-size: 10px;
}
.num:first-child { border-top: 0; height: 19px; }
.num span { margin-left: 5px; }
.num em { margin-left: auto; font-style: normal; margin-right: 4px; letter-spacing: .3px; }
.lt, .rt { width: 0; height: 0; border-top: 3.500px solid transparent; border-bottom: 3.500px solid transparent; flex: none; }
.lt { border-right: 4px solid #6d6d6d; }
.rt { border-left: 4px solid #6d6d6d; }
.con { margin-top: 9px; margin-bottom: 1px; }
.ori { margin-top: 9px; }
.glob { width: 126px; margin: 1px 0 0 7px; padding-left: 7px; }
.pro { margin-top: 8px; }

.viewport {
  position: relative;
  flex: 1;
  background-color: #393939;
  background-image:
    linear-gradient(#444 1px, transparent 1px),
    linear-gradient(90deg, #444 1px, transparent 1px),
    linear-gradient(#3d3d3d 1px, transparent 1px),
    linear-gradient(90deg, #3d3d3d 1px, transparent 1px);
  background-size: 112.7px 112.7px, 112.7px 112.7px, 22.54px 22.54px, 22.54px 22.54px;
  background-position: 0 11.500px, 20.500px 0, 0 11.500px, 20.500px 0;
  overflow: hidden;
}
.scene { position: absolute; left: 0; top: 0; }
.vlabel { position: absolute; color: #f0f0f0; font-size: 10px; line-height: 12px; }
.ortho { left: 19px; top: 12px; }
.cyl { left: 69px; top: 568px; }
.axl { position: absolute; font-size: 10px; line-height: 10px; }
.zl { left: 26px; top: 526px; color: #1c1cd0; }
.yl { left: 52px; top: 551px; color: #18b018; }
.npanel {
  position: absolute;
  left: 930px;
  top: 22px;
  width: 14px;
  height: 14px;
  background: #2e2e2e;
  border-radius: 3px 0 0 3px;
  color: #999;
  font-size: 10px;
  line-height: 14px;
  text-align: center;
}

.strip { position: relative; height: 21px; background: #757575; flex: none; overflow: hidden; }
.shade-l, .shade-r { position: absolute; top: 0; bottom: 0; background: #444; }
.shade-l { left: 0; width: 188px; }
.shade-r { left: 996px; right: 0; }
.tick { position: absolute; top: 0; bottom: 0; width: 1px; background: rgba(0, 0, 0, 0.12); }
.tick.major { background: rgba(0, 0, 0, 0.32); }
.play { position: absolute; left: 188px; top: 0; bottom: 0; width: 3px; background: #60c040; }
.scrub { height: 15px; background: #727272; flex: none; padding: 0 7px 0 3px; box-sizing: border-box; border-top: 1px solid #5c5c5c; }
.scrub-bar {
  position: relative;
  height: 13px;
  border-radius: 7px;
  background: linear-gradient(#8a8a8a, #a2a2a2 40%, #8c8c8c);
  box-shadow: inset 0 0 0 1px #5f5f5f;
  margin-right: 0;
}
.rl { position: absolute; top: 0; line-height: 13px; transform: translateX(-50%); font-size: 10px; white-space: nowrap; }

.clockg { width: 39px; margin-left: 0; }
.clockg .cell { width: 20px; }
.range { display: flex; width: 226px; height: 20px; margin-left: 6px; border: 1px solid #2b2b2b; border-radius: 10px; overflow: hidden; box-sizing: border-box; flex: none; }
.range .num, .range .num:first-child { flex: 1; height: 100%; border-top: 0; border-left: 1px solid #2b2b2b; }
.range .num:first-child { border-left: 0; flex: 0 0 116px; }
.range.cur { width: 88px; margin-left: 7px; }
.range.cur .num:first-child { flex: 1; }
.trans { width: 119px; margin-left: 17px; }
.trans .cell { width: 20px; }
.sync { width: 115px; margin-left: 6px; padding-left: 7px; }
.recb { width: 19px; margin-left: 17px; }
.keyg { width: 171px; margin-left: 5px; }
.kfield { flex: 1; justify-content: flex-start; padding-left: 2px; background: linear-gradient(#b0b0b0, #909090); }
.keyg .cell:not(.kfield) { width: 20px; }

.rtop { position: relative; height: 27px; background: #727272; border-bottom: 1px solid #1a1a1a; box-sizing: border-box; flex: none; }
.outl { position: relative; height: 247px; background: #727272; flex: none; }
.ohdr { position: relative; height: 27px; display: flex; align-items: center; padding-left: 8px; border-bottom: 1px solid #666; box-sizing: border-box; }
.ohdr .menu { width: auto; gap: 20px; margin-left: 13px; }
.scenes { width: 118px; margin-left: 12px; border-radius: 5px 0 0 5px; padding-left: 7px; border-right: 0; padding-right: 0; }
.orows { position: relative; height: 203px; overflow: hidden; }
.col { position: absolute; top: 0; bottom: 0; width: 1px; background: #626262; z-index: 1; }
.c1 { left: 200px; }
.c2 { left: 220px; }
.c3 { left: 240px; }
.tree { position: absolute; left: 26px; top: 10px; width: 1px; height: 120px; background: #2e2e2e; }
.orow { position: relative; height: 20px; display: flex; align-items: center; background: #6e6e6e; font-size: 10px; }
.orow.alt { background: #727272; }
.branch { position: absolute; top: 10px; height: 1px; background: #2e2e2e; }
.b0 { left: 10px; width: 22px; }
.b1 { left: 27px; width: 14px; }
.exp { width: 14px; height: 16px; flex: none; position: relative; z-index: 1; }
.exp svg { margin-left: -1px; }
.exp.in0 { margin-left: 1px; margin-right: 6px; }
.exp.in1 { margin-left: 20px; margin-right: 7px; }
.exp.in1.sub { margin-left: 25px; margin-right: 2px; }
.oicon { width: 19px; height: 19px; border-radius: 50%; display: flex; align-items: center; justify-content: center; flex: none; margin-left: -2px; position: relative; }
.oname { margin-left: 2px; white-space: nowrap; position: relative; top: 1px; }
.oname.light { color: #fff; }
.bar { width: 1px; height: 12px; background: #3c3c3c; margin-left: 10px; margin-right: 7px; flex: none; }
.extra { width: 19px; height: 19px; display: flex; align-items: center; justify-content: center; flex: none; border-radius: 50%; }
.extra.halo { background: #8f8f8f; }
.vis { position: absolute; left: 203px; top: 2px; display: flex; gap: 5px; z-index: 2; }
.oscroll { position: absolute; left: 4px; right: 5px; top: 230px; height: 13px; background: #656565; border-radius: 7px; }
.othumb { width: 218px; height: 13px; border-radius: 7px; background: linear-gradient(#8f8f8f, #a0a0a0 50%, #848484); box-shadow: inset 0 0 0 1px #5f5f5f; }

.props { position: relative; flex: 1; background: #727272; border-top: 1px solid #1a1a1a; }
.phdr { position: relative; height: 26px; display: flex; align-items: center; padding-left: 8px; border-bottom: 1px solid #666; box-sizing: border-box; }
.ptabs { display: flex; margin-left: 9px; height: 20px; border: 1px solid #2b2b2b; border-right: 0; border-radius: 5px 0 0 5px; overflow: hidden; flex: 1; box-sizing: border-box; }
.ptab { width: 20px; flex: none; display: flex; align-items: center; justify-content: center; background: linear-gradient(#5a5a5a, #656565); border-right: 1px solid #2b2b2b; box-sizing: border-box; }
.ptab svg { opacity: .75; }
.ptab.act { background: #5680c2; }
.ptab.act svg { opacity: 1; }
.crumb { display: flex; align-items: center; height: 20px; margin-top: 9px; padding-left: 9px; font-size: 10px; }
.cr-scene { margin-left: 9px; }
.cr-arrow { width: 0; height: 0; border-top: 3px solid transparent; border-bottom: 3px solid transparent; border-left: 4px solid #333; margin: 0 0 0 7px; }
.cr-cube { margin-left: 12px; }
.crumb span { margin-left: 4px; }
.addmod { width: 245px; margin: 15px 0 0 7px; padding-left: 6px; }

.taskbar { height: 40px; background: #000; display: flex; color: #fff; flex: none; position: relative; }
.start { width: 48px; display: flex; align-items: center; justify-content: center; }
.search { width: 344px; background: #303030; display: flex; align-items: center; box-sizing: border-box; padding-left: 10px; }
.ring { width: 20px; height: 20px; border: 3px solid #e8e8e8; border-radius: 50%; box-sizing: border-box; }
.ph { margin-left: 6px; font-family: "Open Sans", sans-serif; font-size: 14px; color: #9c9c9c; }
.mic { margin-left: auto; margin-right: 11px; }
.tb { position: relative; width: 49px; display: flex; align-items: center; justify-content: center; box-sizing: border-box; flex: none; }
.tb.run::after { content: ""; position: absolute; left: 4px; right: 4px; bottom: 0; height: 2px; background: #a7f3de; }
.tb.active { background: #2e2e2e; }
.tb.active::after { left: 0; right: 0; }
.badge {
  position: absolute;
  width: 17px;
  height: 17px;
  left: 29px;
  top: 19px;
  background: #333;
  border: 1px solid #777;
  border-radius: 50%;
  font-family: "Open Sans", sans-serif;
  font-size: 11px;
  line-height: 17px;
  text-align: center;
  color: #fff;
}
.tray { margin-left: auto; width: 278px; display: flex; align-items: center; font-family: "Open Sans", sans-serif; flex: none; }
.ti { display: flex; align-items: center; justify-content: center; flex: none; position: relative; }
.w24 { width: 24px; }
.w25 { width: 25px; }
.w21 { width: 21px; }
.w26 { width: 26px; }
.eng { width: 32px; font-size: 12px; }
.clock { width: 73px; display: flex; flex-direction: column; align-items: center; font-size: 12px; line-height: 18px; }
.notif { width: 52px; }
.note { margin: -3px 14px 0 0; }
.nb { left: 18px; top: 7px; }
</style>
